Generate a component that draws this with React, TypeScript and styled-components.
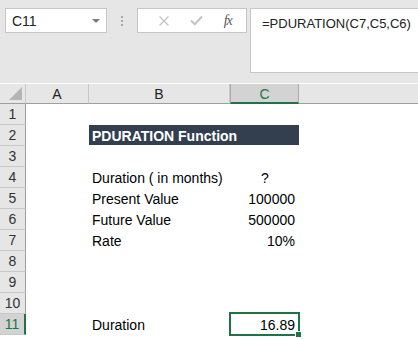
import React from "react";
import styled, { createGlobalStyle } from "styled-components";

const Global = createGlobalStyle`
  html, body { margin: 0; padding: 0; background: #ffffff; }
  body { font-family: "Liberation Sans", Arial, sans-serif; overflow: hidden; }
`;

const Page = styled.div`
  width: 418px;
  height: 339px;
  background: #ffffff;
  display: flex;
  flex-direction: column;
  overflow: hidden;
`;

const Toolbar = styled.div`
  height: 83px;
  flex-shrink: 0;
  background: #e6e6e6;
  display: flex;
  align-items: flex-start;
  padding: 8px 0 0 5px;
  box-sizing: border-box;
`;

const NameBox = styled.div`
  flex-shrink: 0;
  width: 102px;
  height: 25px;
  box-sizing: border-box;
  background: #ffffff;
  border: 1px solid #c6c6c6;
  display: flex;
  align-items: center;
  justify-content: space-between;
  padding: 0 6px 0 6px;
  font-size: 14px;
  color: #222;
`;

const Caret = styled.span`
  width: 0;
  height: 0;
  border-left: 4px solid transparent;
  border-right: 4px solid transparent;
  border-top: 4px solid #7a7a7a;
`;

const Dots = styled.div`
  flex-shrink: 0;
  width: 30px;
  height: 25px;
  display: flex;
  flex-direction: column;
  align-items: center;
  justify-content: center;
  gap: 2px;
`;

const Dot = styled.span`
  width: 2px;
  height: 2px;
  background: #a8a8a8;
`;

const FuncBox = styled.div`
  flex-shrink: 0;
  width: 110px;
  height: 25px;
  box-sizing: border-box;
  background: #ffffff;
  border: 1px solid #c6c6c6;
  display: flex;
  align-items: center;
  justify-content: space-around;
  padding: 0 4px 0 10px;
`;

const Fx = styled.span`
  font-family: "Liberation Serif", "Times New Roman", serif;
  font-style: italic;
  font-size: 14px;
  color: #555;
  letter-spacing: -1px;
`;

const FormulaBox = styled.div`
  flex: 1;
  min-width: 0;
  margin-left: 3px;
  height: 65px;
  box-sizing: border-box;
  background: #ffffff;
  border: 1px solid #c6c6c6;
  border-right: none;
  padding: 7px 0 0 11px;
  font-size: 13px;
  color: #222;
  white-space: nowrap;
`;

const Sheet = styled.div`
  display: grid;
  grid-template-columns: 26px 63px 141px 69px 1fr;
  grid-template-rows: 21px repeat(11, 21px);
  font-size: 14px;
  color: #000;
`;

const Corner = styled.div`
  background: #e6e6e6;
  border-bottom: 1px solid #9e9e9e;
  border-right: 1px solid #c8c8c8;
  box-sizing: border-box;
  position: relative;
  margin-top: 1px;
`;

const CornerTri = styled.span`
  position: absolute;
  right: 3px;
  bottom: 3px;
  width: 0;
  height: 0;
  border-left: 13px solid transparent;
  border-bottom: 13px solid #b4b4b4;
`;

const ColHead = styled.div<{ $sel?: boolean; $last?: boolean }>`
  margin-top: 1px;
  background: ${(p) => (p.$sel ? "#d3d3d3" : "#e6e6e6")};
  border-right: ${(p) => (p.$last ? "none" : p.$sel ? "1px solid #ababab" : "1px solid #c8c8c8")};
  border-left: ${(p) => (p.$sel ? "1px solid #ababab" : "none")};
  border-bottom: ${(p) => (p.$sel ? "2px solid #217346" : "1px solid #9e9e9e")};
  box-sizing: border-box;
  display: flex;
  align-items: center;
  justify-content: center;
  color: ${(p) => (p.$sel ? "#217346" : "#222")};
  font-size: 14px;
  padding-top: 1px;
`;

const RowHead = styled.div<{ $sel?: boolean }>`
  background: ${(p) => (p.$sel ? "#d3d3d3" : "#e6e6e6")};
  border-bottom: 1px solid #c8c8c8;
  border-right: ${(p) => (p.$sel ? "2px solid #217346" : "1px solid #9e9e9e")};
  box-sizing: border-box;
  display: flex;
  align-items: center;
  justify-content: center;
  color: ${(p) => (p.$sel ? "#217346" : "#333")};
  font-size: 14px;
`;

const Cell = styled.div<{ $right?: boolean; $span?: number; $indent?: number }>`
  grid-column: span ${(p) => p.$span ?? 1};
  display: flex;
  align-items: center;
  justify-content: ${(p) => (p.$right ? "flex-end" : "flex-start")};
  padding: 1px 4px 0 ${(p) => p.$indent ?? 3}px;
  box-sizing: border-box;
  white-space: nowrap;
  position: relative;
`;

const Title = styled(Cell)`
  background: #333f4f;
  color: #ffffff;
  font-weight: bold;
  margin: 0 0 1px 0;
`;

const Active = styled.span`
  position: absolute;
  left: -1px;
  top: -2px;
  right: -1px;
  bottom: -1px;
  border: 2px solid #217346;
  pointer-events: none;
`;

const Handle = styled.span`
  position: absolute;
  right: -4px;
  bottom: -4px;
  width: 5px;
  height: 5px;
  background: #217346;
  border: 1px solid #ffffff;
`;

const XIcon = () => (
  <svg width="12" height="12" viewBox="0 0 12 12">
    <path d="M1.5 1.5 L10.5 10.5 M10.5 1.5 L1.5 10.5" stroke="#c4c4c4" strokeWidth="1.4" fill="none" />
  </svg>
);

const CheckIcon = () => (
  <svg width="13" height="11" viewBox="0 0 13 11">
    <path d="M1 5.5 L4.8 9.2 L12 1.5" stroke="#c4c4c4" strokeWidth="2" fill="none" />
  </svg>
);

type Row = { n: number; b?: string; c?: string; title?: boolean; active?: boolean };

const rows: Row[] = [
  { n: 1 },
  { n: 2, title: true },
  { n: 3 },
  { n: 4, b: "Duration ( in months)", c: "?" },
  { n: 5, b: "Present Value", c: "100000" },
  { n: 6, b: "Future Value", c: "500000" },
  { n: 7, b: "Rate", c: "10%" },
  { n: 8 },
  { n: 9 },
  { n: 10 },
  { n: 11, b: "Duration", c: "16.89", active: true },
];

export default function App() {
  return (
    <Page>
      <Global />
      <Toolbar>
        <NameBox>
          <span>C11</span>
          <Caret />
        </NameBox>
        <Dots>
          <Dot />
          <Dot />
          <Dot />
        </Dots>
        <FuncBox>
          <XIcon />
          <CheckIcon />
          <Fx>fx</Fx>
        </FuncBox>
        <FormulaBox>=PDURATION(C7,C5,C6)</FormulaBox>
      </Toolbar>
      <Sheet>
        <Corner>
          <CornerTri />
        </Corner>
        <ColHead>A</ColHead>
        <ColHead>B</ColHead>
        <ColHead $sel>C</ColHead>
        <ColHead $last />
        {rows.map((r) => (
          <React.Fragment key={r.n}>
            <RowHead $sel={r.active}>{r.n}</RowHead>
            <Cell />
            {r.title ? (
              <Title $span={2}>PDURATION Function</Title>
            ) : (
              <>
                <Cell>{r.b}</Cell>
                <Cell $right={r.c !== "?"} $indent={r.c === "?" ? 31 : 3}>
                  {r.c}
                  {r.active && (
                    <Active>
                      <Handle />
                    </Active>
                  )}
                </Cell>
              </>
            )}
            <Cell />
          </React.Fragment>
        ))}
      </Sheet>
    </Page>
  );
}
